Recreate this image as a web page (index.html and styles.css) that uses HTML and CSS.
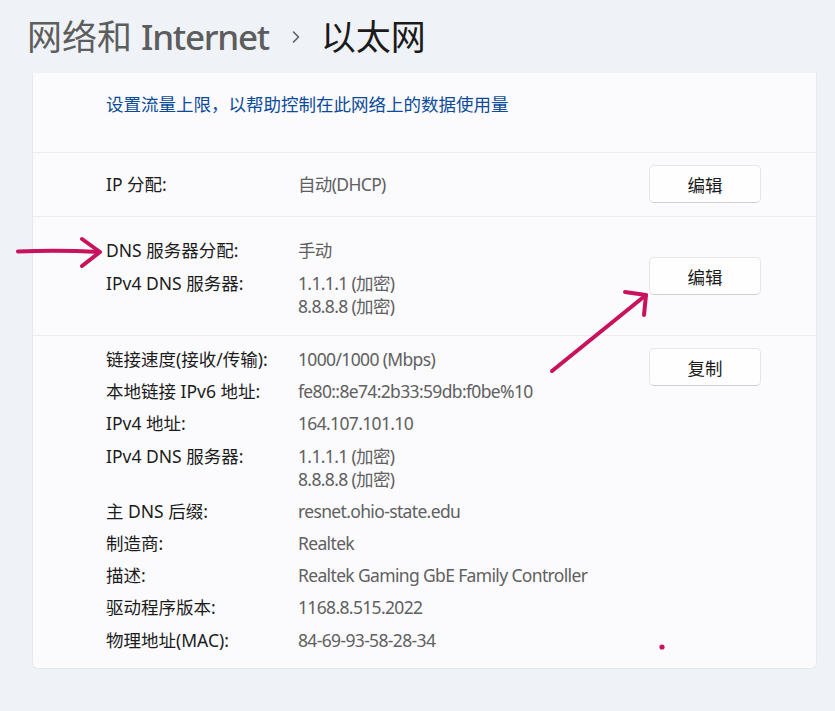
FILE: index.html
```html
<!DOCTYPE html>
<html lang="zh-CN">
<head>
    <meta charset="UTF-8">
    <meta name="viewport" content="width=device-width, initial-scale=1.0">
    <title>以太网</title>
    <link rel="stylesheet" href="styles.css">
</head>
<body>
    <div class="header">
        <span class="crumb">网络和 <span class="latin">Internet</span></span>
        <svg class="chevron" width="10" height="14" viewBox="0 0 10 14">
            <path d="M2.5 2 L7.5 7 L2.5 12" fill="none" stroke="#5f5f5f" stroke-width="1.6" stroke-linecap="round" stroke-linejoin="round"/>
        </svg>
        <span class="current">以太网</span>
    </div>

    <div class="card">
        <div class="section top">
            <span class="link">设置流量上限，以帮助控制在此网络上的数据使用量</span>
        </div>

        <div class="section ip">
            <div class="info">
                <div class="label">IP 分配:</div>
                <div class="val">自动(DHCP)</div>
            </div>
            <button class="btn">编辑</button>
        </div>

        <div class="section dns">
            <div class="info">
                <div class="label">DNS 服务器分配:</div>
                <div class="val">手动</div>
                <div class="label">IPv4 DNS 服务器:</div>
                <div class="val">1.1.1.1 (加密)<br>8.8.8.8 (加密)</div>
            </div>
            <button class="btn">编辑</button>
        </div>

        <div class="section props">
            <div class="info">
                <div class="label">链接速度(接收/传输):</div>
                <div class="val">1000/1000 (Mbps)</div>
                <div class="label">本地链接 IPv6 地址:</div>
                <div class="val">fe80::8e74:2b33:59db:f0be%10</div>
                <div class="label">IPv4 地址:</div>
                <div class="val">164.107.101.10</div>
                <div class="label">IPv4 DNS 服务器:</div>
                <div class="val">1.1.1.1 (加密)<br>8.8.8.8 (加密)</div>
                <div class="label">主 DNS 后缀:</div>
                <div class="val">resnet.ohio-state.edu</div>
                <div class="label">制造商:</div>
                <div class="val">Realtek</div>
                <div class="label">描述:</div>
                <div class="val">Realtek Gaming GbE Family Controller</div>
                <div class="label">驱动程序版本:</div>
                <div class="val">1168.8.515.2022</div>
                <div class="label">物理地址(MAC):</div>
                <div class="val">84-69-93-58-28-34</div>
            </div>
            <button class="btn">复制</button>
        </div>
    </div>

    <!-- hand-drawn annotations over the screenshot -->
    <svg class="marks" width="835" height="711" viewBox="0 0 835 711">
        <g fill="none" stroke="#c8125c" stroke-width="4" stroke-linecap="round" stroke-linejoin="round">
            <path d="M18 251.5 Q60 250 99 252"/>
            <path d="M82 239 L100 252 L82 266"/>
            <path d="M552 371 L646 295"/>
            <path d="M625 292 L646 295 L644 315"/>
        </g>
        <circle cx="662" cy="647" r="2.6" fill="#c8125c"/>
    </svg>
</body>
</html>
```

FILE: styles.css
```css
*{
    margin: 0;
    padding: 0;
    box-sizing: border-box;
}
body{
    width: 835px;
    height: 711px;
    overflow: hidden;
    position: relative;
    background-color: #eff3f8;
    font-family: "Noto Sans", "Noto Sans CJK SC", sans-serif;
    font-size: 17.5px;
    color: #1b1b1b;
}
.header{
    height: 73px;
    padding-left: 27px;
    display: flex;
    align-items: center;
    font-size: 35px;
    line-height: 44px;
}
.crumb{
    color: #5d5d5d;
}
.latin{
    font-weight: 500;
    letter-spacing: -1.3px;
}
.chevron{
    margin: 0 20px 0 22px;
}
.current{
    color: #1b1b1b;
}
.card{
    margin-left: 32px;
    width: 785px;
    background-color: #fbfbfe;
    border: 1px solid #e7e9ee;
    border-top: none;
    border-radius: 0 0 6px 6px;
}
.section{
    display: flex;
    align-items: center;
    padding: 12px 55px 12px 73px;
    border-bottom: 1px solid #ebedf0;
}
.section:last-child{
    border-bottom: none;
}
.section.top{
    padding-top: 15px;
    padding-bottom: 32px;
    line-height: 32px;
}
.link{
    color: #0b4a98;
}
.section.ip{
    padding-bottom: 13px;
}
.section.dns{
    padding-top: 22px;
    padding-bottom: 17px;
}
.section.dns .info{
    row-gap: 10px;
}
.section.dns .btn{
    margin-bottom: 5px;
}
.section.props{
    align-items: flex-start;
    padding-top: 12px;
    padding-bottom: 16px;
}
.section.props .info{
    row-gap: 9.2px;
}
.info{
    flex: 1;
    display: grid;
    grid-template-columns: 192px 1fr;
    row-gap: 9px;
    line-height: 23px;
}
.val{
    color: #606060;
    letter-spacing: -0.65px;
}
.btn{
    width: 112px;
    height: 38px;
    background-color: #fefefe;
    border: 1px solid #e6e6e6;
    border-bottom-color: #cfcfcf;
    border-radius: 5px;
    font-family: inherit;
    font-size: 17.5px;
    color: #1b1b1b;
}
.marks{
    position: absolute;
    left: 0;
    top: 0;
    pointer-events: none;
}
```
